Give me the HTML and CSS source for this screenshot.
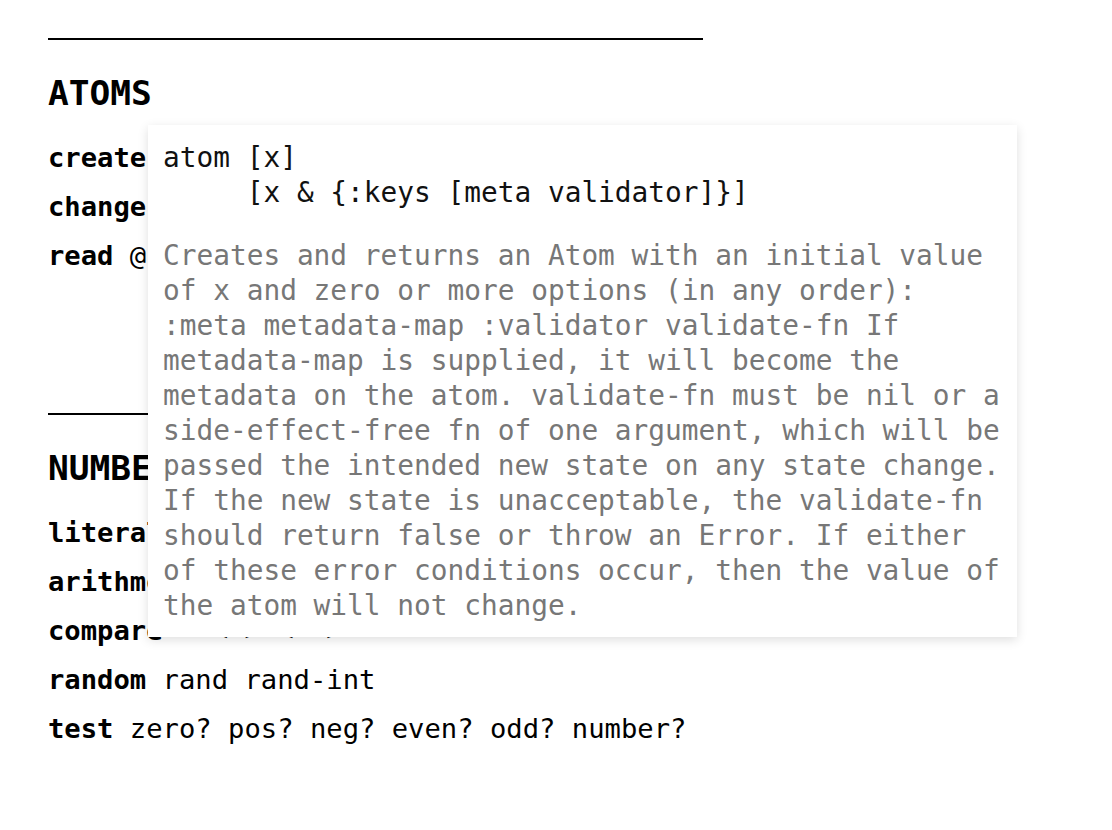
FILE: index.html
```html
<!DOCTYPE html>
<html>
<head>
<meta charset="utf-8">
<link rel="stylesheet" href="styles.css">
</head>
<body>
<div class="page">
  <section class="group">
    <hr class="rule">
    <h2 class="title">ATOMS</h2>
    <div class="row"><b class="label">create</b> atom</div>
    <div class="row"><b class="label">change</b> swap! reset! compare-and-set!</div>
    <div class="row"><b class="label">read</b> @ deref</div>
  </section>
  <section class="group">
    <hr class="rule">
    <h2 class="title">NUMBERS</h2>
    <div class="row"><b class="label">literals</b> 7 3.14 -1.2e3 0x0000ff</div>
    <div class="row"><b class="label">arithmetic</b> + - * / quot rem mod</div>
    <div class="row"><b class="label">compare</b> = &lt; &gt; &lt;= &gt;= ==</div>
    <div class="row"><b class="label">random</b> rand rand-int</div>
    <div class="row"><b class="label">test</b> zero? pos? neg? even? odd? number?</div>
  </section>

  <div class="tooltip">
    <pre class="sig">atom [x]
     [x &amp; {:keys [meta validator]}]</pre>
    <p class="doc">Creates and returns an Atom with an initial value of x and zero or more options (in any order): :meta metadata-map :validator validate-fn If metadata-map is supplied, it will become the metadata on the atom. validate-fn must be nil or a side-effect-free fn of one argument, which will be passed the intended new state on any state change. If the new state is unacceptable, the validate-fn should return false or throw an Error. If either of these error conditions occur, then the value of the atom will not change.</p>
  </div>
</div>
</body>
</html>
```

FILE: styles.css
```css
html, body {
  margin: 0;
  padding: 0;
  background: #fff;
}

.page {
  position: relative;
  padding: 38px 0 0 48px;
  font-family: "DejaVu Sans Mono", "Liberation Mono", monospace;
  color: #000;
}

.group {
  width: 655px;
  padding-bottom: 133px;
}

.group:last-child {
  padding-bottom: 0;
}

.rule {
  margin: 0;
  border: 0;
  height: 2px;
  background: #000;
}

.title {
  margin: 33px 0 20px;
  font-size: 34.5px;
  line-height: 40px;
  font-weight: bold;
}

.row {
  font-size: 27.2px;
  line-height: 49px;
  white-space: nowrap;
}

.label {
  font-weight: bold;
}

.tooltip {
  position: absolute;
  left: 148px;
  top: 125px;
  width: 50ch;
  padding: 15px 17px 14px 15px;
  background: #fff;
  font-size: 27.8px;
  line-height: 35px;
  box-shadow: 0 3px 10px rgba(0, 0, 0, 0.13);
}

.sig {
  margin: 0 0 28px;
  font-family: inherit;
  font-size: inherit;
  line-height: inherit;
  color: #111;
}

.doc {
  margin: 0;
  color: #777;
}
```
